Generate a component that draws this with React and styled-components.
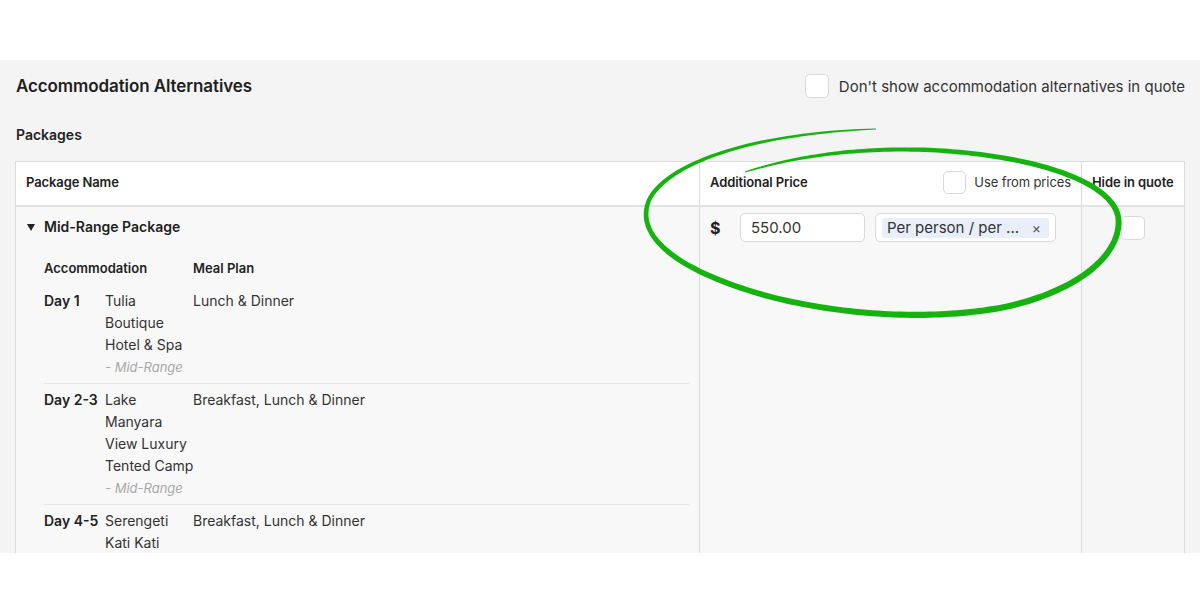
import React from "react";
import styled, { createGlobalStyle } from "styled-components";

const Global = createGlobalStyle`
  html, body { margin: 0; padding: 0; background: #ffffff; }
  body { font-family: Inter, "Noto Sans", "Liberation Sans", sans-serif; color: #222; }
  * { box-sizing: border-box; }
`;

const Page = styled.div`
  position: relative;
  width: 1200px;
  height: 600px;
  padding-top: 60px;
  overflow: hidden;
`;

const Panel = styled.section`
  height: 493px;
  background: #f4f4f4;
  padding: 0 15px;
  overflow: hidden;
`;

const TitleRow = styled.div`
  display: flex;
  align-items: center;
  justify-content: space-between;
  padding-top: 14px;
  height: 38px;
`;

const Title = styled.h2`
  margin: 0;
  padding-left: 1px;
  font-size: 17px;
  font-weight: 600;
  color: #1f1f1f;
  letter-spacing: -0.1px;
`;

const CheckLabel = styled.label`
  display: flex;
  align-items: center;
  gap: ${(p) => p.$gap || 10}px;
  font-size: ${(p) => p.$size || 15}px;
  font-weight: 400;
  color: #333;
  white-space: nowrap;
`;

const Box = styled.span`
  display: inline-block;
  width: ${(p) => p.$s || 24}px;
  height: ${(p) => p.$s || 24}px;
  border: 1px solid #d9d9d9;
  border-radius: 5px;
  background: #fff;
  flex: none;
`;

const Section = styled.h3`
  margin: 27px 0 16px;
  padding-left: 1px;
  font-size: 14px;
  line-height: 20px;
  font-weight: 600;
  color: #222;
`;

const Table = styled.div`
  display: grid;
  grid-template-columns: 684px 382px 1fr;
  border: 1px solid #dcdcdc;
  border-bottom: none;
`;

const HeadCell = styled.div`
  height: 45px;
  background: #fff;
  border-bottom: 2px solid #e2e2e2;
  border-right: ${(p) => (p.$last ? "none" : "1px solid #dcdcdc")};
  display: flex;
  align-items: center;
  justify-content: space-between;
  padding: 0 10px 3px;
  font-size: 13px;
  font-weight: 600;
  color: #222;
  white-space: nowrap;
  letter-spacing: -0.1px;
`;

const BodyCell = styled.div`
  height: 360px;
  background: ${(p) => p.$bg || "#f8f8f8"};
  border-right: ${(p) => (p.$last ? "none" : "1px solid #dcdcdc")};
  padding: ${(p) => p.$pad || "0"};
`;

const PackageTitle = styled.div`
  display: flex;
  align-items: center;
  gap: 9px;
  font-size: 14px;
  line-height: 20px;
  font-weight: 600;
  color: #1f1f1f;
`;

const Caret = styled.span`
  width: 0;
  height: 0;
  border-left: 4.5px solid transparent;
  border-right: 4.5px solid transparent;
  border-top: 7px solid #222;
`;

const Itinerary = styled.div`
  margin-left: 17px;
  margin-top: 21px;
`;

const HeadRow = styled.div`
  display: grid;
  grid-template-columns: 149px 1fr;
  font-size: 13px;
  line-height: 20px;
  font-weight: 600;
  color: #222;
  padding-bottom: 12px;
`;

const Row = styled.div`
  display: grid;
  grid-template-columns: 61px 88px 1fr;
  font-size: 14px;
  line-height: 22px;
  color: #333;
  padding: ${(p) => (p.$first ? "0" : "5px")} 0 5px;
  border-bottom: ${(p) => (p.$end ? "none" : "1px solid #e6e6e6")};
`;

const Day = styled.div`
  font-weight: 600;
  color: #222;
  white-space: nowrap;
`;

const Line = styled.div`
  white-space: nowrap;
`;

const Grade = styled.div`
  font-size: 13px;
  font-style: italic;
  color: #a8a8a8;
`;

const PriceRow = styled.div`
  display: flex;
  align-items: center;
`;

const Dollar = styled.span`
  width: 30px;
  font-size: 16px;
  font-weight: 700;
  color: #222;
`;

const Field = styled.div`
  width: ${(p) => p.$w}px;
  height: 29px;
  border: 1px solid #dadada;
  border-radius: 5px;
  background: #fff;
  display: flex;
  align-items: center;
  padding: 0 ${(p) => p.$px || 10}px;
  font-size: 15px;
  color: #333;
  margin-right: 10px;
`;

const Chip = styled.div`
  flex: 1;
  height: 20px;
  background: #e8eefa;
  border-radius: 3px;
  display: flex;
  align-items: center;
  justify-content: space-between;
  padding: 0 8px 0 5px;
  font-size: 15px;
  color: #333;
  white-space: nowrap;
`;

const Close = styled.span`
  font-size: 14px;
  color: #555;
`;

const CenterBox = styled.div`
  display: flex;
  justify-content: center;
  padding-top: 9px;
`;

const Annotation = styled.svg`
  position: absolute;
  left: 0;
  top: 0;
  pointer-events: none;
`;

const stays = [
  { day: "Day 1", lines: ["Tulia", "Boutique", "Hotel & Spa"], meal: "Lunch & Dinner", grade: "- Mid-Range" },
  { day: "Day 2-3", lines: ["Lake", "Manyara", "View Luxury", "Tented Camp"], meal: "Breakfast, Lunch & Dinner", grade: "- Mid-Range" },
  { day: "Day 4-5", lines: ["Serengeti", "Kati Kati"], meal: "Breakfast, Lunch & Dinner" },
];

// Hand-drawn ellipse as a tapered brush stroke
const segs = [
  [[876, 129], [760, 133], [672, 160], [650, 198]],
  [[650, 198], [632, 235], [676, 272], [775, 298]],
  [[775, 298], [850, 316], [930, 320], [1000, 308]],
  [[1000, 308], [1080, 292], [1124, 252], [1118, 216]],
  [[1118, 216], [1110, 180], [1030, 155], [930, 150]],
  [[930, 150], [850, 147], [790, 158], [745, 172]],
];

function bez(s, t) {
  const [p0, p1, p2, p3] = s;
  const u = 1 - t;
  const x = u * u * u * p0[0] + 3 * u * u * t * p1[0] + 3 * u * t * t * p2[0] + t * t * t * p3[0];
  const y = u * u * u * p0[1] + 3 * u * u * t * p1[1] + 3 * u * t * t * p2[1] + t * t * t * p3[1];
  const dx = 3 * u * u * (p1[0] - p0[0]) + 6 * u * t * (p2[0] - p1[0]) + 3 * t * t * (p3[0] - p2[0]);
  const dy = 3 * u * u * (p1[1] - p0[1]) + 6 * u * t * (p2[1] - p1[1]) + 3 * t * t * (p3[1] - p2[1]);
  return { x, y, dx, dy };
}

function brushPath() {
  const pts = [];
  const N = 40;
  segs.forEach((s, si) => {
    for (let i = si === 0 ? 0 : 1; i <= N; i++) pts.push(bez(s, i / N));
  });
  const total = pts.length - 1;
  const left = [];
  const right = [];
  pts.forEach((p, i) => {
    const g = i / total;
    const w = 1 + 5.2 * Math.pow(Math.sin(Math.PI * g), 0.6);
    const len = Math.hypot(p.dx, p.dy) || 1;
    const nx = -p.dy / len;
    const ny = p.dx / len;
    left.push(`${(p.x + nx * w / 2).toFixed(1)} ${(p.y + ny * w / 2).toFixed(1)}`);
    right.push(`${(p.x - nx * w / 2).toFixed(1)} ${(p.y - ny * w / 2).toFixed(1)}`);
  });
  return "M " + left.join(" L ") + " L " + right.reverse().join(" L ") + " Z";
}

const brush = brushPath();

export default function App() {
  return (
    <>
      <Global />
      <Page>
        <Panel>
          <TitleRow>
            <Title>Accommodation Alternatives</Title>
            <CheckLabel>
              <Box />
              Don't show accommodation alternatives in quote
            </CheckLabel>
          </TitleRow>
          <Section>Packages</Section>
          <Table>
            <HeadCell>Package Name</HeadCell>
            <HeadCell>
              <span>Additional Price</span>
              <CheckLabel $size={13} $gap={8}>
                <Box $s={23} />
                Use from prices
              </CheckLabel>
            </HeadCell>
            <HeadCell $last>Hide in quote</HeadCell>

            <BodyCell $pad="10px 10px 0 11px">
              <PackageTitle>
                <Caret />
                Mid-Range Package
              </PackageTitle>
              <Itinerary>
                <HeadRow>
                  <span>Accommodation</span>
                  <span>Meal Plan</span>
                </HeadRow>
                {stays.map((s, i) => (
                  <Row key={s.day} $first={i === 0} $end={i === stays.length - 1}>
                    <Day>{s.day}</Day>
                    <div>
                      {s.lines.map((l) => (
                        <Line key={l}>{l}</Line>
                      ))}
                      {s.grade && <Grade>{s.grade}</Grade>}
                    </div>
                    <div>{s.meal}</div>
                  </Row>
                ))}
              </Itinerary>
            </BodyCell>
            <BodyCell $pad="6px 10px 0 10px">
              <PriceRow>
                <Dollar>$</Dollar>
                <Field $w={125}>550.00</Field>
                <Field $w={181} $px={6}>
                  <Chip>
                    <span>Per person / per ...</span>
                    <Close>×</Close>
                  </Chip>
                </Field>
              </PriceRow>
            </BodyCell>
            <BodyCell $last $bg="#f6f6f6">
              <CenterBox>
                <Box />
              </CenterBox>
            </BodyCell>
          </Table>
        </Panel>
        <Annotation width="1200" height="600" viewBox="0 0 1200 600">
          <path d={brush} fill="#16b20f" />
        </Annotation>
      </Page>
    </>
  );
}
